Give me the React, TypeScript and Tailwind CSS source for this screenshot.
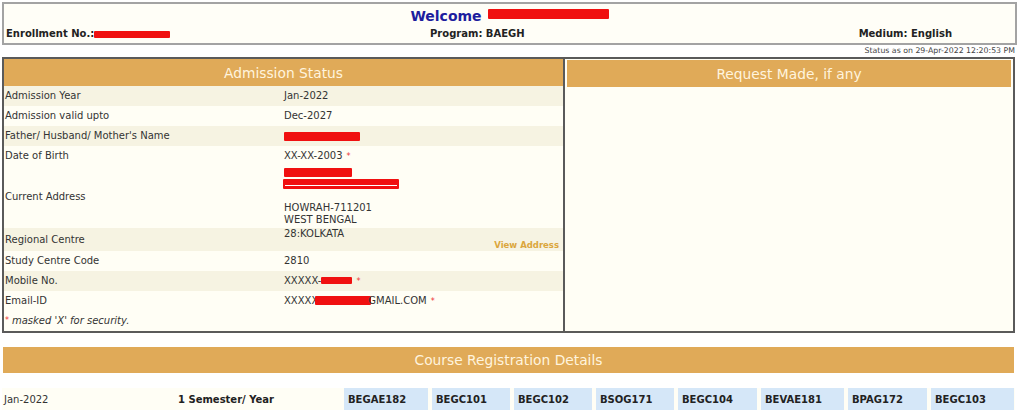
import React from "react";

type InfoRow = {
  label: string;
  value: React.ReactNode;
  shaded?: boolean;
  height: string;
};

const Redact = ({ w, h = "h-[9px]", className = "" }: { w: string; h?: string; className?: string }) => (
  <span className={`inline-block align-middle rounded-[1px] bg-[#f01010] ${w} ${h} ${className}`} />
);

const Star = () => <span className="ml-[4px] text-[8px] text-[#e33]">*</span>;

const courses = [
  { code: "BEGAE182", w: "w-[84px]" },
  { code: "BEGC101", w: "w-[78px]" },
  { code: "BEGC102", w: "w-[78px]" },
  { code: "BSOG171", w: "w-[78px]" },
  { code: "BEGC104", w: "w-[79px]" },
  { code: "BEVAE181", w: "w-[83px]" },
  { code: "BPAG172", w: "w-[79px]" },
  { code: "BEGC103", w: "w-[83px]" },
];

export default function App() {
  const rows: InfoRow[] = [
    { label: "Admission Year", value: "Jan-2022", shaded: true, height: "h-[20px]" },
    { label: "Admission valid upto", value: "Dec-2027", height: "h-[20px]" },
    {
      label: "Father/ Husband/ Mother's Name",
      value: <Redact w="w-[76px]" />,
      shaded: true,
      height: "h-[20px]",
    },
    {
      label: "Date of Birth",
      value: (
        <>
          XX-XX-2003
          <Star />
        </>
      ),
      height: "h-[20px]",
    },
  ];

  const lowerRows: InfoRow[] = [
    { label: "Study Centre Code", value: "2810", height: "h-[20px]" },
    {
      label: "Mobile No.",
      value: (
        <>
          XXXXX-
          <Redact w="w-[31px]" h="h-[7px]" />
          <Star />
        </>
      ),
      shaded: true,
      height: "h-[20px]",
    },
    {
      label: "Email-ID",
      value: (
        <>
          XXXXX
          <Redact w="w-[56px]" h="h-[9px]" className="-ml-[3px] -mr-[3px]" />
          GMAIL.COM
          <Star />
        </>
      ),
      height: "h-[20px]",
    },
  ];

  const renderRow = (r: InfoRow) => (
    <div
      key={r.label}
      className={`flex items-center ${r.height} ${r.shaded ? "bg-[#f6f3e2]" : "bg-[#fffef5]"}`}
    >
      <div className="w-[280px] pl-[1px] text-[#333]">{r.label}</div>
      <div className="flex-1 text-[#333]">{r.value}</div>
    </div>
  );

  return (
    <div className="w-[1024px] h-[410px] overflow-hidden bg-white font-['DejaVu_Sans','Liberation_Sans',sans-serif] text-[10px] leading-[12px] text-[#333]">
      {/* welcome header */}
      <div className="ml-[2px] mt-[2px] w-[1015px] h-[43px] border-2 border-[#a3a3a3] bg-[#fffef7]">
        <div className="flex h-[22px] items-center justify-center gap-[6px] pt-[2px]">
          <span className="text-[14px] font-bold text-[#1d1d9e]">Welcome</span>
          <Redact w="w-[121px]" h="h-[10px]" className="-mt-[4px]" />
        </div>
        <div className="flex h-[16px] items-center font-bold text-[#222]">
          <div className="flex w-[426px] items-center pl-[2px]">
            Enrollment No.:
            <Redact w="w-[76px]" h="h-[7px]" />
          </div>
          <div className="w-[100px]">Program: BAEGH</div>
          <div className="flex-1 pr-[63px] text-right">Medium: English</div>
        </div>
      </div>

      <div className="h-[12px] pr-[9px] pt-[2px] text-right text-[7.8px] leading-[8px] text-[#444]">
        Status as on 29-Apr-2022 12:20:53 PM
      </div>

      {/* panels */}
      <div className="ml-[2px] flex h-[276px] w-[1013px]">
        <div className="flex w-[563px] flex-col border-2 border-[#5a5a5a] bg-[#fffef5]">
          <div className="flex h-[27px] shrink-0 items-center justify-center bg-[#e0aa58] text-[13.8px] text-[#fff4de]">
            Admission Status
          </div>
          {rows.map(renderRow)}
          <div className="flex h-[62px] items-center bg-[#fffef5]">
            <div className="w-[280px] pl-[1px]">Current Address</div>
            <div className="flex h-full flex-1 flex-col">
              <div className="flex h-[12px] items-center">
                <Redact w="w-[68px]" h="h-[9px]" />
              </div>
              <div className="flex h-[12px] items-center">
                <span className="-ml-[1px] inline-block h-[10px] w-[116px] rounded-[1px] bg-[#f01010] p-[2px]">
                  <span className="mt-[4px] block h-[1px] bg-white" />
                </span>
              </div>
              <div className="h-[12px]" />
              <div className="h-[12px]">HOWRAH-711201</div>
              <div className="h-[12px]">WEST BENGAL</div>
            </div>
          </div>
          <div className="flex h-[23px] bg-[#f6f3e2]">
            <div className="flex w-[280px] items-center pl-[1px] pt-[1px]">Regional Centre</div>
            <div className="flex flex-1 flex-col justify-between">
              <div>28:KOLKATA</div>
              <div className="pb-[1px] pr-[4px] text-right text-[8.5px] font-bold leading-[10px] text-[#dba63c]">
                View Address
              </div>
            </div>
          </div>
          {lowerRows.map(renderRow)}
          <div className="flex flex-1 items-center bg-[#fffef5] pl-[1px] italic">
            <span className="mr-[3px] text-[8px] not-italic text-[#e33]">*</span>
            masked 'X' for security.
          </div>
        </div>

        <div className="flex flex-1 flex-col border-2 border-l-0 border-[#5a5a5a] bg-[#fffef5] pb-[2px] pl-[2px] pr-[2px] pt-[1px]">
          <div className="flex h-[27px] shrink-0 items-center justify-center bg-[#e0aa58] text-[13.8px] text-[#fff4de]">
            Request Made, if any
          </div>
          <div className="flex-1" />
        </div>
      </div>

      {/* course registration */}
      <div className="ml-[3px] mt-[14px] flex h-[26px] w-[1011px] items-center justify-center bg-[#e0aa58] text-[13.8px] text-[#fff4de]">
        Course Registration Details
      </div>

      <div className="ml-[2px] mt-[15px] flex h-[24px] w-[1013px] items-stretch bg-[#fffef5]">
        <div className="flex w-[176px] items-center pl-[2px]">Jan-2022</div>
        <div className="flex w-[166px] items-center font-bold text-[#222]">1 Semester/ Year</div>
        <div className="flex gap-[4px]">
          {courses.map((c) => (
            <div
              key={c.code}
              className={`flex items-center bg-[#d5e7f8] pl-[4px] font-bold text-[#222] ${c.w}`}
            >
              {c.code}
            </div>
          ))}
        </div>
      </div>
    </div>
  );
}
